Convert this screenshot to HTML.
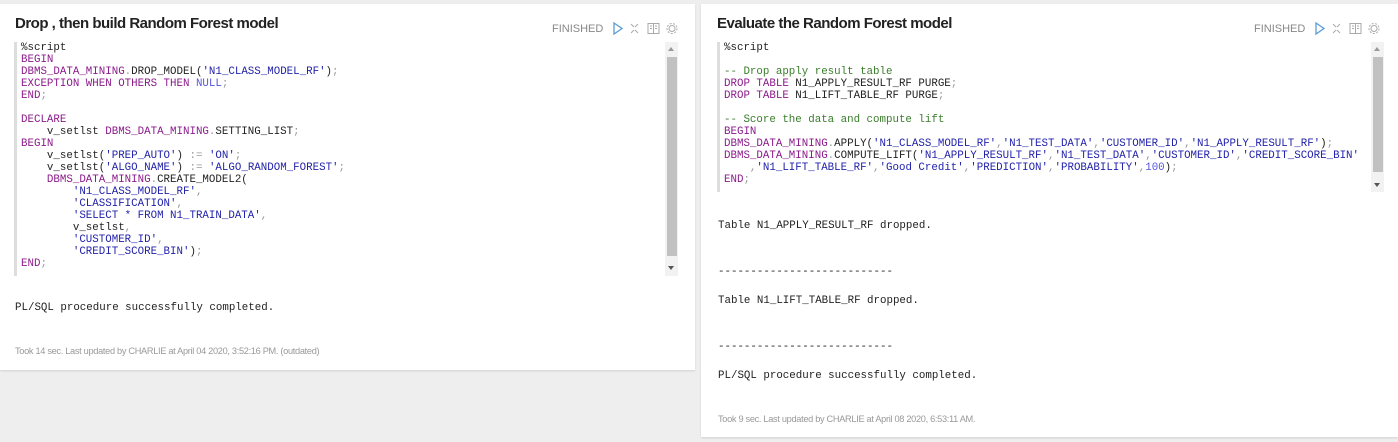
<!DOCTYPE html>
<html><head><meta charset="utf-8"><style>
*{margin:0;padding:0;box-sizing:border-box}
body{width:1398px;height:442px;background:#eeeeee;position:relative;overflow:hidden;font-family:"Liberation Sans",sans-serif}
.p{position:absolute;background:#fff;box-shadow:0 1px 2px rgba(0,0,0,.12)}
.t{position:absolute;font-size:15px;font-weight:bold;color:#222;letter-spacing:-0.5px}
.st{position:absolute;font-size:11px;color:#888;}
.ic{position:absolute}
.code{position:absolute;border-left:3px solid #ddd;background:#fff}
pre{font-family:"Liberation Mono",monospace;font-size:10.8px;line-height:12px;color:#222;white-space:pre}
.k{color:#8b1a8b}.s{color:#2222aa}.c{color:#3a7d2c}.g{color:#999}.n{color:#5555dd}
.sb{position:absolute;width:13px;background:#f2f2f2}
.th{position:absolute;left:2px;width:10px;background:#c1c1c1}
.out{position:absolute;font-family:"Liberation Mono",monospace;font-size:10.8px;color:#222;white-space:pre}
.ft{position:absolute;font-size:9.2px;color:#999;letter-spacing:-0.3px}
</style></head><body>
<div class="p" style="left:0;top:4px;width:695px;height:366px"></div>
<div class="p" style="left:701px;top:4px;width:697px;height:433px"></div>

<div class="t" style="left:15px;top:15px">Drop , then build Random Forest model</div>
<div class="t" style="left:717px;top:15px">Evaluate the Random Forest model</div>

<div class="st" style="left:552px;top:23px">FINISHED</div>
<div class="st" style="left:1254px;top:23px">FINISHED</div>

<svg class="ic" style="left:612px;top:21px" width="70" height="16" viewBox="0 0 70 16">
<path d="M2 2 L10 7.5 L2 13 Z" fill="none" stroke="#5b9bd5" stroke-width="1.3"/>
<g stroke="#aaa" stroke-width="1" fill="none"><path d="M19 3l3 3M26 3l-3 3M19 12l3-3M26 12l-3-3"/></g>
<rect x="36" y="2.5" width="11" height="10" fill="none" stroke="#aaa"/><path d="M41.5 2.5v10M38 5h2M38 7.5h2M43 5h2M43 7.5h2" stroke="#aaa"/>
<circle cx="60" cy="7.5" r="3" fill="none" stroke="#aaa"/><circle cx="60" cy="7.5" r="5" fill="none" stroke="#aaa" stroke-dasharray="2 1.5"/>
</svg>
<svg class="ic" style="left:1314px;top:21px" width="70" height="16" viewBox="0 0 70 16">
<path d="M2 2 L10 7.5 L2 13 Z" fill="none" stroke="#5b9bd5" stroke-width="1.3"/>
<g stroke="#aaa" stroke-width="1" fill="none"><path d="M19 3l3 3M26 3l-3 3M19 12l3-3M26 12l-3-3"/></g>
<rect x="36" y="2.5" width="11" height="10" fill="none" stroke="#aaa"/><path d="M41.5 2.5v10M38 5h2M38 7.5h2M43 5h2M43 7.5h2" stroke="#aaa"/>
<circle cx="60" cy="7.5" r="3" fill="none" stroke="#aaa"/><circle cx="60" cy="7.5" r="5" fill="none" stroke="#aaa" stroke-dasharray="2 1.5"/>
</svg>

<div class="code" style="left:14px;top:42px;width:666px;height:234px">
<pre style="position:absolute;left:4px;top:0">%script
<span class="k">BEGIN</span>
<span class="k">DBMS_DATA_MINING</span><span class="g">.</span>DROP_MODEL(<span class="s">'N1_CLASS_MODEL_RF'</span>)<span class="g">;</span>
<span class="k">EXCEPTION WHEN OTHERS THEN</span> <span class="n">NULL</span><span class="g">;</span>
<span class="k">END</span><span class="g">;</span>

<span class="k">DECLARE</span>
    v_setlst <span class="k">DBMS_DATA_MINING</span><span class="g">.</span>SETTING_LIST<span class="g">;</span>
<span class="k">BEGIN</span>
    v_setlst(<span class="s">'PREP_AUTO'</span>) <span class="g">:=</span> <span class="s">'ON'</span><span class="g">;</span>
    v_setlst(<span class="s">'ALGO_NAME'</span>) <span class="g">:=</span> <span class="s">'ALGO_RANDOM_FOREST'</span><span class="g">;</span>
    <span class="k">DBMS_DATA_MINING</span><span class="g">.</span>CREATE_MODEL2(
        <span class="s">'N1_CLASS_MODEL_RF'</span><span class="g">,</span>
        <span class="s">'CLASSIFICATION'</span><span class="g">,</span>
        <span class="s">'SELECT * FROM N1_TRAIN_DATA'</span><span class="g">,</span>
        v_setlst<span class="g">,</span>
        <span class="s">'CUSTOMER_ID'</span><span class="g">,</span>
        <span class="s">'CREDIT_SCORE_BIN'</span>)<span class="g">;</span>
<span class="k">END</span><span class="g">;</span></pre>
<div class="sb" style="left:648px;top:0;height:234px"><div style="position:absolute;left:3px;top:5px;border:3.5px solid transparent;border-bottom:4px solid #999;border-top:0"></div><div class="th" style="top:15px;height:199px"></div><div style="position:absolute;left:3px;top:224px;border:3.5px solid transparent;border-top:4px solid #555;border-bottom:0"></div></div>
</div>

<div class="code" style="left:717px;top:42px;width:666px;height:150px">
<pre style="position:absolute;left:4px;top:0">%script

<span class="c">-- Drop apply result table</span>
<span class="k">DROP TABLE</span> N1_APPLY_RESULT_RF PURGE<span class="g">;</span>
<span class="k">DROP TABLE</span> N1_LIFT_TABLE_RF PURGE<span class="g">;</span>

<span class="c">-- Score the data and compute lift</span>
<span class="k">BEGIN</span>
<span class="k">DBMS_DATA_MINING</span><span class="g">.</span>APPLY(<span class="s">'N1_CLASS_MODEL_RF'</span><span class="g">,</span><span class="s">'N1_TEST_DATA'</span><span class="g">,</span><span class="s">'CUSTOMER_ID'</span><span class="g">,</span><span class="s">'N1_APPLY_RESULT_RF'</span>)<span class="g">;</span>
<span class="k">DBMS_DATA_MINING</span><span class="g">.</span>COMPUTE_LIFT(<span class="s">'N1_APPLY_RESULT_RF'</span><span class="g">,</span><span class="s">'N1_TEST_DATA'</span><span class="g">,</span><span class="s">'CUSTOMER_ID'</span><span class="g">,</span><span class="s">'CREDIT_SCORE_BIN'</span>
    <span class="g">,</span><span class="s">'N1_LIFT_TABLE_RF'</span><span class="g">,</span><span class="s">'Good Credit'</span><span class="g">,</span><span class="s">'PREDICTION'</span><span class="g">,</span><span class="s">'PROBABILITY'</span><span class="g">,</span><span class="n">100</span>)<span class="g">;</span>
<span class="k">END</span><span class="g">;</span></pre>
<div class="sb" style="left:651px;top:0;height:150px"><div style="position:absolute;left:3px;top:5px;border:3.5px solid transparent;border-bottom:4px solid #999;border-top:0"></div><div class="th" style="top:15px;height:115px"></div><div style="position:absolute;left:3px;top:141px;border:3.5px solid transparent;border-top:4px solid #555;border-bottom:0"></div></div>
</div>

<div class="out" style="left:15px;top:302px">PL/SQL procedure successfully completed.</div>
<div class="ft" style="left:15px;top:346px">Took 14 sec. Last updated by CHARLIE at April 04 2020, 3:52:16 PM. (outdated)</div>

<div class="out" style="left:718px;top:220px">Table N1_APPLY_RESULT_RF dropped.</div>
<div class="out" style="left:718px;top:266px">---------------------------</div>
<div class="out" style="left:718px;top:295px">Table N1_LIFT_TABLE_RF dropped.</div>
<div class="out" style="left:718px;top:341px">---------------------------</div>
<div class="out" style="left:718px;top:370px">PL/SQL procedure successfully completed.</div>
<div class="ft" style="left:718px;top:414px">Took 9 sec. Last updated by CHARLIE at April 08 2020, 6:53:11 AM.</div>
</body></html>
